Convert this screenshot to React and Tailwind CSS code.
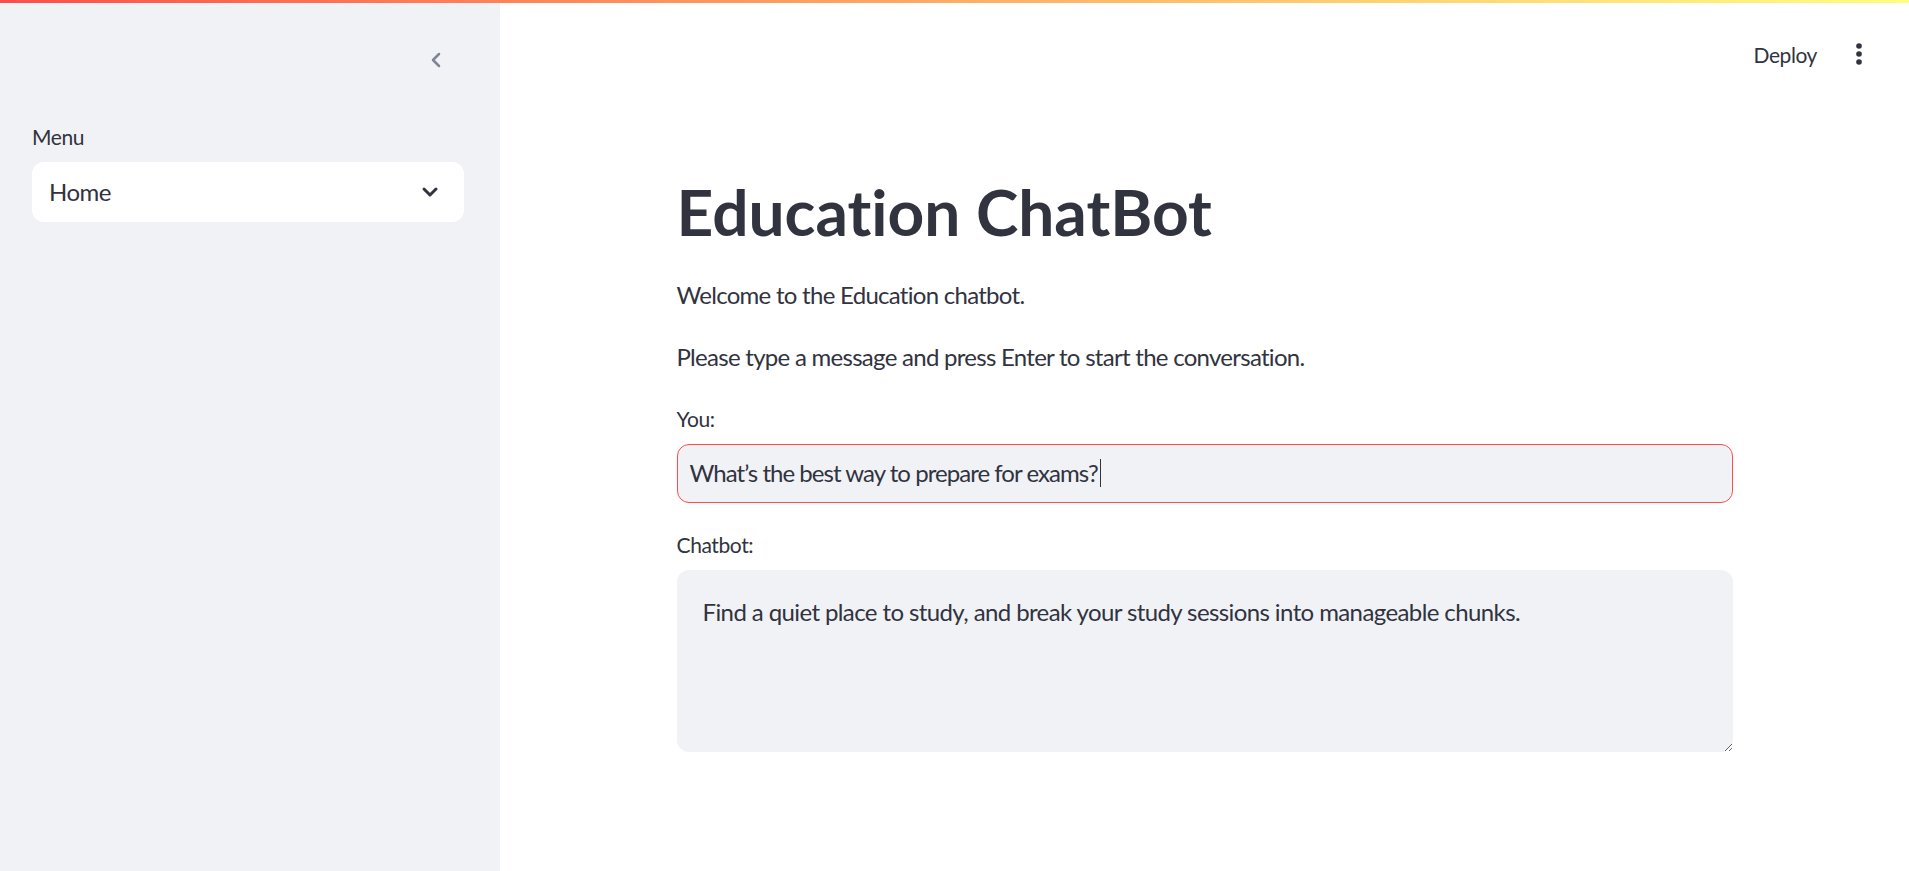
import { ChevronDown, ChevronLeft } from 'lucide-react'

const FONT = "font-['Lato','Open_Sans',sans-serif] [font-variant-ligatures:none]"

function Sidebar() {
  return (
    <aside className="flex w-[500px] shrink-0 flex-col bg-[#f0f2f6] pl-8 pr-9">
      <div className="flex h-[122px] items-start justify-end pt-[48px] pr-[16px]">
        <ChevronLeft className="h-[24px] w-[24px] text-[#808495]" strokeWidth={2.5} />
      </div>
      <label className="block text-[21px] leading-[30px] tracking-[-0.02em] text-[#31333f]">Menu</label>
      <div className="mt-[10px] flex h-[60px] items-center justify-between rounded-[12px] bg-white pl-[17px] pr-[22px]">
        <span className="text-[24px] tracking-[-0.02em] text-[#31333f]">Home</span>
        <ChevronDown className="h-[24px] w-[24px] text-[#31333f]" strokeWidth={3} />
      </div>
    </aside>
  )
}

function Header() {
  return (
    <div className="flex h-[90px] items-start justify-end gap-[38px] pr-[46px] pt-[40px]">
      <button className="text-[21px] leading-[30px] tracking-[-0.02em] text-[#31333f]">Deploy</button>
      <svg width="8" height="24" viewBox="0 0 8 24" className="mt-[2px] text-[#31333f]" aria-hidden="true">
        <circle cx="4" cy="4" r="2.8" fill="currentColor" />
        <circle cx="4" cy="12" r="2.8" fill="currentColor" />
        <circle cx="4" cy="20" r="2.8" fill="currentColor" />
      </svg>
    </div>
  )
}

export default function App() {
  return (
    <div className={`relative flex h-[871px] w-full overflow-hidden bg-white ${FONT} text-[#31333f]`}>
      <div className="absolute left-0 right-0 top-0 z-10 h-[3px] bg-gradient-to-r from-[#ff4b4b] to-[#fffd80]" />
      <Sidebar />
      <main className="flex flex-1 flex-col">
        <Header />
        <div className="mx-auto w-[1056px] pt-[84px] tracking-[-0.025em]">
          <h1 className="text-[64px] font-bold leading-[1.2] tracking-normal">Education ChatBot</h1>
          <p className="mt-[26px] text-[24px] leading-[36px] tracking-[-0.03em]">Welcome to the Education chatbot.</p>
          <p className="mt-[26px] text-[24px] leading-[36px] tracking-[-0.03em]">
            Please type a message and press Enter to start the conversation.
          </p>
          <label className="mt-[29px] block text-[21px] leading-[30px]">You:</label>
          <div className="mt-[10px] flex h-[59px] items-center rounded-[12px] border border-[#ff4b4b] bg-[#f0f2f6] pl-[12px]">
            <span className="text-[24px] leading-[36px] tracking-[-0.04em]">What’s the best way to prepare for exams?</span>
            <span className="ml-[2px] h-[28px] w-[1px] bg-[#31333f]" />
          </div>
          <label className="mt-[27px] block text-[21px] leading-[30px]">Chatbot:</label>
          <textarea
            readOnly
            defaultValue="Find a quiet place to study, and break your study sessions into manageable chunks."
            className="mt-[10px] block h-[182px] w-full rounded-[12px] bg-[#f0f2f6] px-[26px] py-[24px] text-[24px] leading-[36px] tracking-[-0.025em] text-[#31333f] outline-none"
          />
        </div>
      </main>
    </div>
  )
}
